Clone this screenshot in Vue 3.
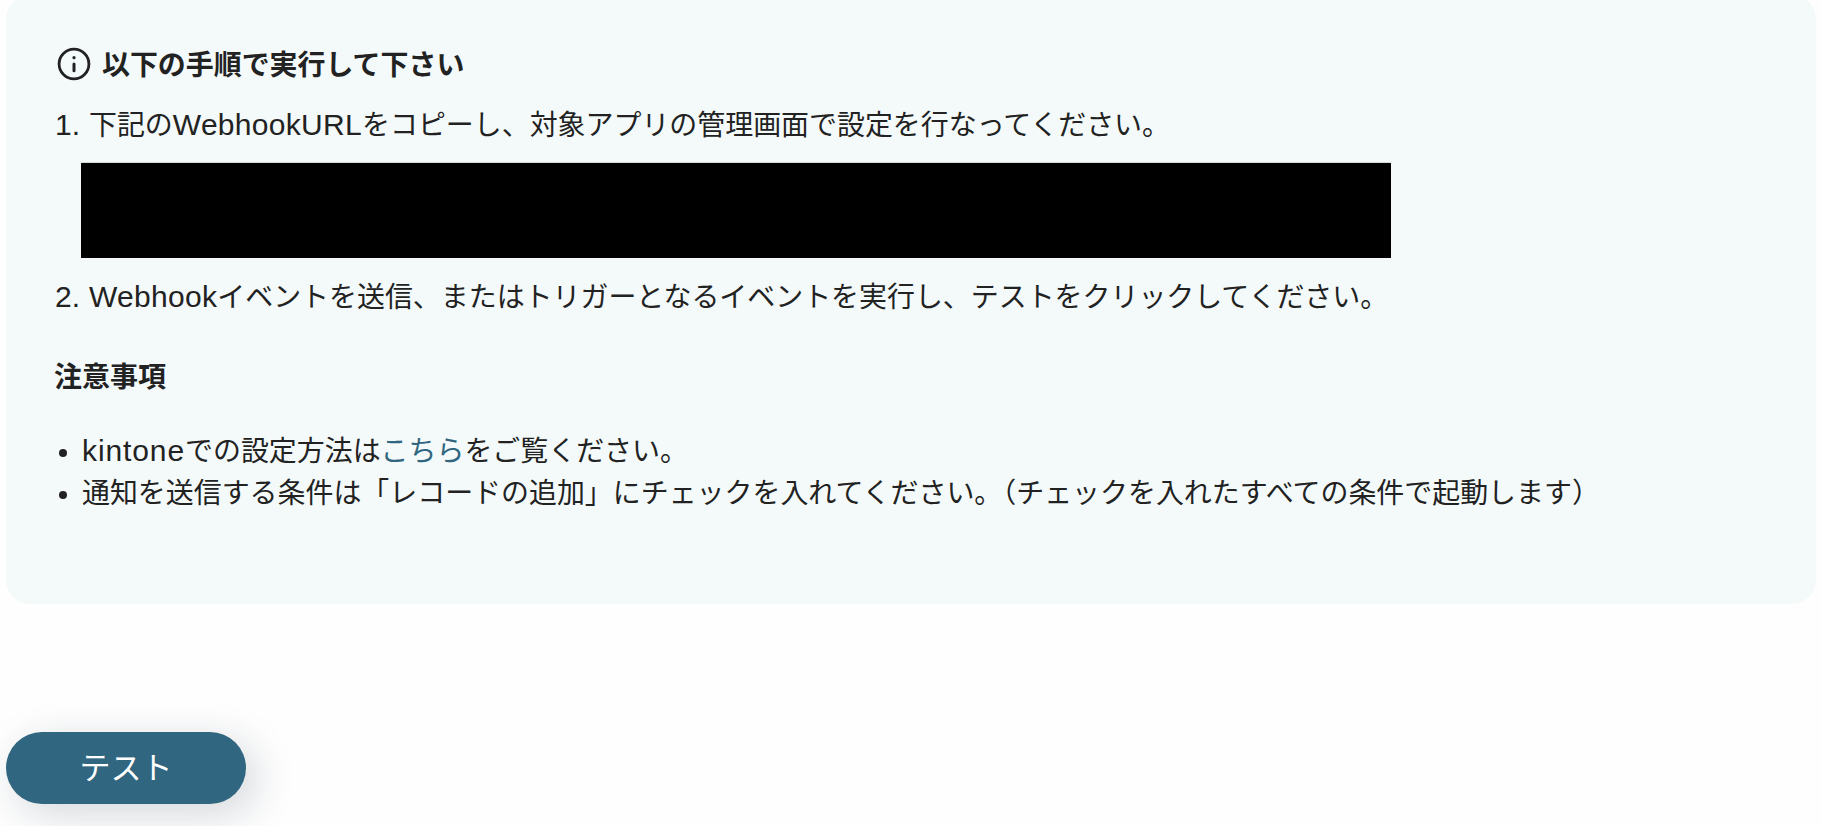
<script setup>
import { ref } from 'vue'

const url = ref('')
const testado = ref(false)

function testar() {
  testado.value = true
}
</script>

<template>
  <div class="pagina">
    <section class="painel">
      <div class="titulo">
        <svg class="icone" viewBox="0 0 34 34" fill="none">
          <circle cx="17" cy="17" r="14.9" stroke="#222" stroke-width="2.8" />
          <circle cx="17" cy="10.7" r="1.6" fill="#222" />
          <path d="M17 17v6.8" stroke="#222" stroke-width="3" stroke-linecap="round" />
        </svg>
        <span>以下の手順で実行して下さい</span>
      </div>

      <div class="passo">
        <span class="num">1.</span>
        <p>下記の<span class="latim">WebhookURL</span>をコピーし、対象アプリの管理画面で設定を行なってください。</p>
      </div>

      <div class="url">{{ url }}</div>

      <div class="passo">
        <span class="num">2.</span>
        <p><span class="latim">Webhook</span>イベントを送信、またはトリガーとなるイベントを実行し、テストをクリックしてください。</p>
      </div>

      <h4>注意事項</h4>

      <ul class="notas">
        <li><span class="latim kintone">kintone</span>での設定方法は<a @click.prevent>こちら</a>をご覧ください。</li>
        <li>通知を送信する条件は「レコードの追加」にチェックを入れてください。（チェックを入れたすべての条件で起動します）</li>
      </ul>
    </section>

    <button class="botao" @click="testar">テスト</button>
  </div>
</template>

<style>
body {
  background-color: #fefefe;
  overflow: hidden;
}
</style>

<style scoped>
.pagina {
  height: 826px;
  overflow: hidden;
  font-family: "Noto Sans CJK JP", sans-serif;
  font-size: 27.95px;
  line-height: 42px;
  color: #222;
}
.painel {
  box-sizing: border-box;
  width: 1810px;
  height: 609px;
  margin: -5px 0 0 6px;
  padding: 47px 49px 0;
  border-radius: 24px;
  background-color: #f4fafa;
}
.titulo {
  display: flex;
  align-items: center;
  gap: 11px;
  margin-left: 2px;
  font-weight: 700;
}
.icone {
  width: 34px;
  height: 34px;
  margin-top: 2px;
}
.passo {
  display: flex;
  align-items: baseline;
  height: 42px;
  margin-top: 18px;
  white-space: nowrap;
}
.num {
  width: 34px;
  font-family: "Liberation Sans", sans-serif;
  font-size: 30px;
  line-height: 1;
}
p {
  margin: 0;
}
.latim {
  font-family: "Liberation Sans", sans-serif;
  font-size: 30px;
  line-height: 1;
  letter-spacing: 0.3px;
}
.kintone {
  letter-spacing: 0.9px;
}
.url {
  width: 1310px;
  height: 95px;
  margin: 19px 0 0 26px;
  background-color: #000;
  box-shadow: 0 -1px 0 -0.5px #bbb;
}
.url + .passo {
  margin-top: 16px;
}
h4 {
  margin: 38px 0 0 -1px;
  font-size: 28px;
  font-weight: 700;
}
.notas {
  list-style: none;
  margin: 32px 0 0;
  padding: 0;
  white-space: nowrap;
}
.notas li {
  display: flex;
  align-items: baseline;
  height: 42px;
}
.notas li::before {
  content: "";
  width: 8px;
  height: 8px;
  margin: 0 15px 0 4px;
  border-radius: 50%;
  background-color: #222;
  position: relative;
  top: -4px;
}
a {
  color: #30667f;
  cursor: pointer;
}
.botao {
  display: block;
  width: 240px;
  height: 72px;
  margin: 128px 0 0 6px;
  padding: 0 0 4px;
  border: none;
  border-radius: 36px;
  background-color: #30667f;
  color: #fff;
  font-family: inherit;
  font-size: 31px;
  line-height: 68px;
  box-shadow: 10px 10px 40px rgba(20, 40, 60, 0.18);
}
</style>
